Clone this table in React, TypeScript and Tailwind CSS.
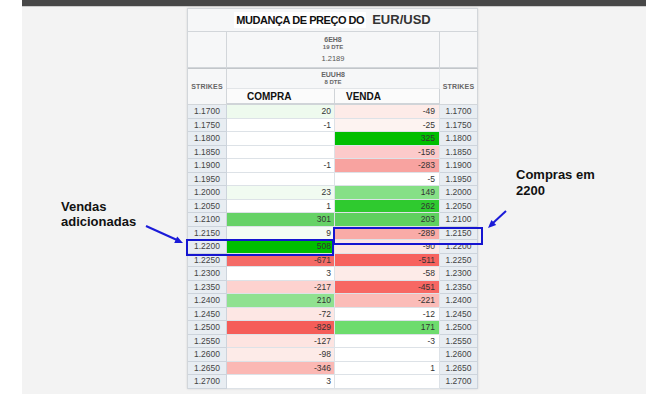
const F = { fontFamily: '"Liberation Sans", Arial, sans-serif' };

type Row = [string, string, string, string, string];

// strike, compra, compra bg, venda, venda bg
const rows: Row[] = [
  ["1.1700", "20", "bg-[#eefaee]", "-49", "bg-[#fdebe8]"],
  ["1.1750", "-1", "bg-white", "-25", "bg-[#fdf3f1]"],
  ["1.1800", "", "bg-white", "325", "bg-[#00be00]"],
  ["1.1850", "", "bg-white", "-156", "bg-[#fccaca]"],
  ["1.1900", "-1", "bg-white", "-283", "bg-[#f8a3a0]"],
  ["1.1950", "", "bg-white", "-5", "bg-white"],
  ["1.2000", "23", "bg-[#f1fbf1]", "149", "bg-[#86e086]"],
  ["1.2050", "1", "bg-white", "262", "bg-[#2fca2f]"],
  ["1.2100", "301", "bg-[#66d266]", "203", "bg-[#5fd05f]"],
  ["1.2150", "9", "bg-[#f4fcf4]", "-289", "bg-[#f9aba7]"],
  ["1.2200", "508", "bg-[#00be00]", "-90", "bg-[#fde6e3]"],
  ["1.2250", "-671", "bg-[#f46b67]", "-511", "bg-[#f7625e]"],
  ["1.2300", "3", "bg-white", "-58", "bg-[#fdebe8]"],
  ["1.2350", "-217", "bg-[#fdd2cf]", "-451", "bg-[#f76763]"],
  ["1.2400", "210", "bg-[#90e190]", "-221", "bg-[#fbbcb8]"],
  ["1.2450", "-72", "bg-[#fde7e4]", "-12", "bg-white"],
  ["1.2500", "-829", "bg-[#f55d59]", "171", "bg-[#6ddc6d]"],
  ["1.2550", "-127", "bg-[#fde4e1]", "-3", "bg-white"],
  ["1.2600", "-98", "bg-[#fdebe8]", "", "bg-white"],
  ["1.2650", "-346", "bg-[#fbb8b4]", "1", "bg-white"],
  ["1.2700", "3", "bg-white", "", "bg-white"],
];

const cols = "grid grid-cols-[39px_108px_105px_38px]";

export default function App() {
  return (
    <div className="relative flex h-[394px] w-[648px] overflow-hidden bg-white" style={F}>
      <div className="ml-[22px] flex w-[624px] flex-col bg-[#f3f3f3]">
        <div className="h-[6px] bg-[#474747]" />
        <div className="h-px bg-[#cbcbcb]" />

        <div className="ml-[165px] mt-[1px] w-[291px] border-l border-t border-[#d2d6da] shadow-[0_0_2px_rgba(0,0,0,0.12)]">
          {/* header */}
          <div className={`${cols} grid-rows-[23px_36px_21px_16px] bg-[#f6f7f8] text-[#666]`}>
            <div className="col-span-4 flex items-center justify-center gap-[6px] border-b border-r border-[#d2d6da]">
              <span className="bg-white px-[2px] text-[11px] font-bold tracking-[-0.45px] text-[#111]">
                MUDANÇA DE PREÇO DO
              </span>
              <span className="text-[13px] font-bold text-[#333]">EUR/USD</span>
            </div>

            <div className="border-b border-r border-[#d2d6da]" />
            <div className="col-span-2 flex flex-col items-center border-b border-r border-[#d2d6da] pt-[4px] font-bold">
              <span className="text-[7px] leading-[8px]">6EH8</span>
              <span className="text-[6px] leading-[7px]">19 DTE</span>
              <span className="mt-[3px] text-[7.5px] font-normal leading-[9px] text-[#555]">1.2189</span>
            </div>
            <div className="border-b border-r border-[#d2d6da]" />

            <div className="row-span-2 flex items-center justify-center border-b border-r border-t border-t-[#c2c6ca] border-[#d2d6da] pt-[2px] text-[7px] font-bold tracking-[0.2px]">
              STRIKES
            </div>
            <div className="col-span-2 flex flex-col items-center border-b border-r border-t border-t-[#c2c6ca] border-[#e2e5e8] pt-[2px] font-bold">
              <span className="text-[7px] leading-[8px]">EUUH8</span>
              <span className="text-[6px] leading-[7px]">8 DTE</span>
            </div>
            <div className="row-span-2 flex items-center justify-center border-b border-r border-t border-t-[#c2c6ca] border-[#d2d6da] pt-[2px] text-[7px] font-bold tracking-[0.2px]">
              STRIKES
            </div>

            <div className="flex items-center border-b-2 border-r border-[#d0d4d8] bg-[#fbfbfb] pl-[20px] text-[10px] font-bold text-[#111]">
              COMPRA
            </div>
            <div className="flex items-center border-b-2 border-r border-[#d0d4d8] bg-[#fbfbfb] pl-[11px] text-[10px] font-bold text-[#111]">
              VENDA
            </div>
          </div>

          {/* data rows */}
          {rows.map(([strike, buy, buyBg, sell, sellBg]) => (
            <div key={strike} className={`${cols} h-[13.5px] text-[8.5px] leading-none text-[#333]`}>
              <div className="flex items-center justify-center border-b border-r border-[#cdd4dc] bg-[#e8edf2] text-[#444]">
                {strike}
              </div>
              <div className={`flex items-center justify-end border-b border-r border-[#dde2e7] pr-[3px] ${buyBg}`}>
                {buy}
              </div>
              <div className={`flex items-center justify-end border-b border-r border-[#dde2e7] pr-[4px] ${sellBg}`}>
                {sell}
              </div>
              <div className="flex items-center justify-center border-b border-r border-[#cdd4dc] bg-[#e8edf2] text-[#444]">
                {strike}
              </div>
            </div>
          ))}
        </div>
      </div>

      {/* highlight boxes */}
      <div className="absolute left-[186px] top-[239px] h-[17px] w-[148px] border-2 border-[#1515d0]" />
      <div className="absolute left-[333px] top-[227px] h-[18px] w-[150px] border-2 border-[#1515d0]" />

      {/* annotations */}
      <div className="absolute left-[61px] top-[199px] text-[13px] font-bold leading-[15px] text-[#111]">
        Vendas
        <br />
        adicionadas
      </div>
      <div className="absolute left-[516px] top-[167px] text-[13px] font-bold leading-[16px] text-[#111]">
        Compras em
        <br />
        2200
      </div>

      <svg className="pointer-events-none absolute left-0 top-0" width="648" height="394" viewBox="0 0 648 394">
        <line x1="146" y1="226" x2="177" y2="240" stroke="#1a1ad8" strokeWidth="2" />
        <polygon points="183,243 174.2,242.9 177.2,236.5" fill="#1a1ad8" />
        <line x1="506" y1="211" x2="493" y2="223" stroke="#1a1ad8" strokeWidth="2" />
        <polygon points="488,228 491.4,220 496.2,225" fill="#1a1ad8" />
      </svg>
    </div>
  );
}
